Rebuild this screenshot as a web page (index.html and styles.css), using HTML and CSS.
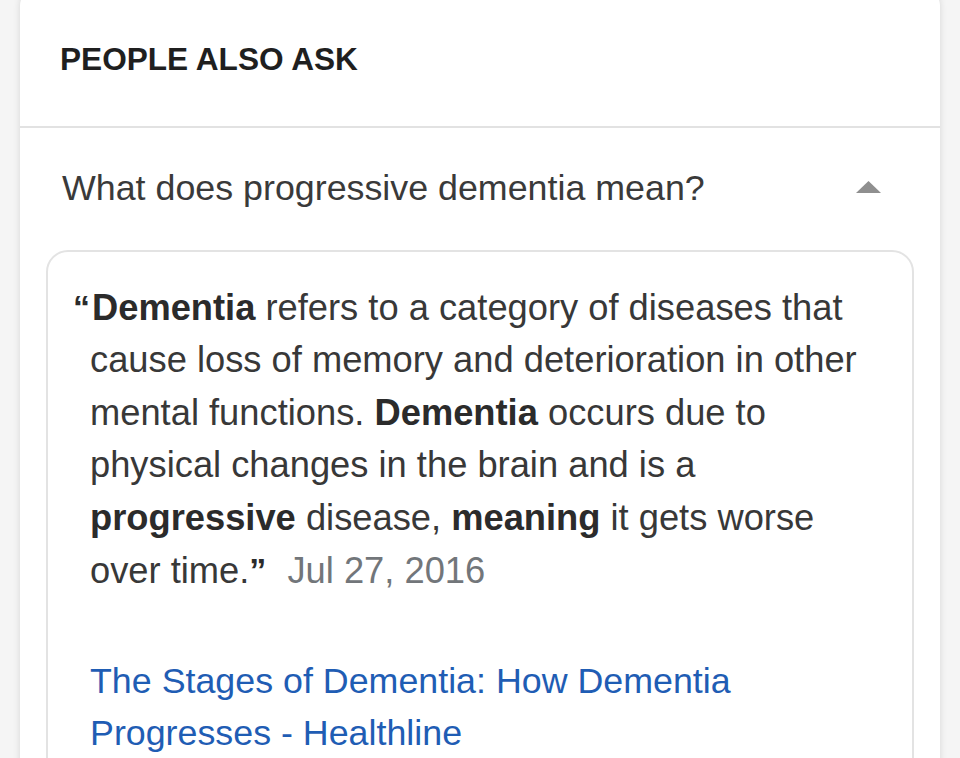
FILE: index.html
```html
<!DOCTYPE html>
<html lang="en">
<head>
<meta charset="utf-8">
<title>People also ask</title>
<link rel="stylesheet" href="styles.css">
</head>
<body>
<div class="card">
  <div class="card-header">PEOPLE ALSO ASK</div>
  <div class="question">
    <span class="question-text">What does progressive dementia mean?</span>
    <svg class="caret" width="25" height="12" viewBox="0 0 25 12" aria-hidden="true"><polygon points="12.5,0 25,12 0,12" fill="#8f8f8f"/></svg>
  </div>
  <div class="answer">
    <p class="snippet"><b class="q open">&ldquo;</b><b>Dementia</b> refers to a category of diseases that cause loss of memory and deterioration in other mental functions. <b>Dementia</b> occurs due to physical changes in the brain and is a <b>progressive</b> disease, <b>meaning</b> it gets worse over time.<b class="q">&rdquo;</b> <span class="date">Jul 27, 2016</span></p>
    <a class="source" href="#">The Stages of Dementia: How Dementia Progresses - Healthline</a>
  </div>
</div>
</body>
</html>
```

FILE: styles.css
```css
html, body {
  margin: 0;
  padding: 0;
}
body {
  width: 960px;
  height: 758px;
  overflow: hidden;
  background: #f5f5f5;
  font-family: "Liberation Sans", Arial, Helvetica, sans-serif;
}
.card {
  margin: -14px 20px 0;
  min-height: 900px;
  background: #fff;
  border-radius: 20px;
  box-shadow: 0 0 7px rgba(0, 0, 0, 0.13);
}
.card-header {
  padding: 55px 40px 49px;
  font-size: 31.6px;
  line-height: 36px;
  font-weight: bold;
  color: #1f1f1f;
  border-bottom: 2px solid #e2e2e2;
}
.question {
  display: flex;
  align-items: center;
  justify-content: space-between;
  padding: 38px 59px 40px 42px;
}
.question-text {
  font-size: 35.8px;
  line-height: 44px;
  color: #3a3a3a;
}
.caret {
  display: block;
  margin-top: -3px;
}
.answer {
  margin: 0 26px;
  padding: 29px 40px 40px 42px;
  border: 2px solid #e3e3e3;
  border-radius: 22px;
  min-height: 700px;
}
.snippet {
  margin: 0;
  font-size: 36.3px;
  line-height: 52.4px;
  color: #383838;
  text-indent: -17px;
}
.snippet b {
  color: #2b2b2b;
}
.q {
  font-size: 34px;
  vertical-align: 1px;
}
.q.open {
  margin-right: 2px;
}
.date {
  color: #72767a;
  margin-left: 11px;
}
.source {
  display: block;
  margin-top: 58px;
  font-size: 35.8px;
  line-height: 52px;
  color: #1f5db4;
  text-decoration: none;
}
```
